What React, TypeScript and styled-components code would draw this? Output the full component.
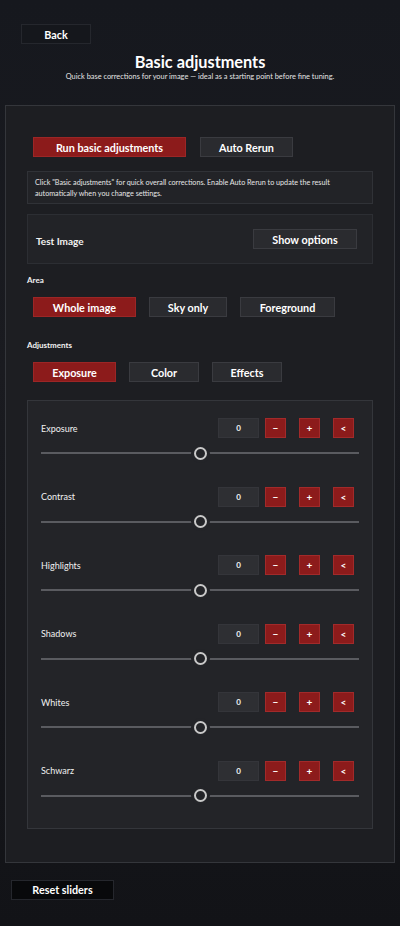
import React, { useState } from "react";
import styled, { createGlobalStyle } from "styled-components";

const GlobalStyle = createGlobalStyle`
  html, body {
    margin: 0;
    padding: 0;
    background: #14161b;
  }
  body {
    font-family: Lato, "Open Sans", "Liberation Sans", sans-serif;
    color: #f2f2f2;
  }
  * {
    box-sizing: border-box;
  }
`;

const Page = styled.div`
  min-height: 926px;
  background: linear-gradient(180deg, #16181e 0%, #1a1b20 40%, #121317 100%);
  padding: 24px 0 26px;
`;

const TopBar = styled.div`
  display: flex;
  padding-left: 21px;
`;

const Header = styled.header`
  display: flex;
  flex-direction: column;
  align-items: center;
  margin-top: 8px;
`;

const Title = styled.h1`
  margin: 0;
  font-size: 16.3px;
  line-height: 20px;
  font-weight: 700;
  color: #ffffff;
`;

const Subtitle = styled.p`
  margin: 0;
  font-size: 7.4px;
  line-height: 10px;
  color: #e4e4e4;
`;

const Button = styled.button<{ $variant?: "red" | "dark" | "black" | "ghost"; $width: number }>`
  display: block;
  height: 20px;
  width: ${(p) => p.$width}px;
  padding: 0;
  border: 1px solid
    ${(p) =>
      p.$variant === "red"
        ? "#9c2626"
        : p.$variant === "black" || p.$variant === "ghost"
          ? "#25272d"
          : "#3a3b40"};
  background: ${(p) =>
    p.$variant === "red"
      ? "#8c1b1b"
      : p.$variant === "black"
        ? "#08090b"
        : p.$variant === "ghost"
          ? "#15171c"
          : "#2a2b2f"};
  color: #ffffff;
  font-family: inherit;
  font-size: 10.8px;
  font-weight: 700;
  cursor: pointer;
`;

const Panel = styled.main`
  margin: 23px 5px 0;
  border: 1px solid #34363b;
  background: #1d1e22;
  padding: 31px 21px 33px;
`;

const ButtonRow = styled.div<{ $gap: number }>`
  display: flex;
  gap: ${(p) => p.$gap}px;
  padding-left: 6px;
`;

const InfoBox = styled.div`
  margin-top: 14px;
  border: 1px solid #303237;
  background: #222327;
  padding: 5px 7px 4px;
  font-size: 7.2px;
  line-height: 11px;
  color: #e6e6e6;
`;

const TestBox = styled.div`
  margin-top: 10px;
  height: 50px;
  border: 1px solid #2c2e33;
  background: #222327;
  display: flex;
  align-items: center;
  justify-content: space-between;
  padding: 0 15px 0 8px;
`;

const TestLabel = styled.span`
  font-size: 10px;
  font-weight: 700;
  margin-top: 3px;
`;

const SectionLabel = styled.div<{ $top: number }>`
  margin-top: ${(p) => p.$top}px;
  margin-bottom: 12px;
  font-size: 8px;
  line-height: 10px;
  font-weight: 700;
`;

const SliderPanel = styled.div`
  margin-top: 18px;
  border: 1px solid #34363b;
  background: #232428;
  padding: 17px 13px 25px 13px;
  display: flex;
  flex-direction: column;
  gap: 26.6px;
`;

const SliderRow = styled.div`
  display: flex;
  flex-direction: column;
  gap: 8px;
`;

const Controls = styled.div`
  display: flex;
  align-items: center;
  height: 20px;
  padding-right: 5px;
`;

const RowLabel = styled.span`
  flex: 1;
  font-size: 9px;
  color: #f0f0f0;
`;

const ValueBox = styled.div`
  width: 41px;
  height: 20px;
  background: #2e2f33;
  border: 1px solid #34353a;
  display: flex;
  align-items: center;
  justify-content: center;
  font-size: 8px;
  font-weight: 700;
  margin-right: 6px;
`;

const StepButton = styled.button<{ $gapLeft: number }>`
  width: 21px;
  height: 20px;
  margin-left: ${(p) => p.$gapLeft}px;
  padding: 0;
  background: #8c1b1b;
  border: 1px solid #a22a2a;
  color: #ffffff;
  font-family: inherit;
  font-size: 10px;
  font-weight: 700;
  display: flex;
  align-items: center;
  justify-content: center;
`;

const Range = styled.input`
  -webkit-appearance: none;
  appearance: none;
  width: 100%;
  height: 14px;
  margin: 0;
  background: transparent;

  &::-webkit-slider-runnable-track {
    height: 2px;
    background: #5a5b60;
  }
  &::-webkit-slider-thumb {
    -webkit-appearance: none;
    width: 13px;
    height: 13px;
    margin-top: -5.5px;
    border-radius: 50%;
    border: 2px solid #c9c9c9;
    background: #232428;
    box-shadow: 0 0 0 3px #232428;
  }
`;

const Footer = styled.div`
  display: flex;
  padding: 17px 0 0 11px;
`;

const rows = ["Exposure", "Contrast", "Highlights", "Shadows", "Whites", "Schwarz"];

export default function App() {
  const [values, setValues] = useState<number[]>(rows.map(() => 0));

  const update = (i: number, v: number) =>
    setValues((prev) => prev.map((x, j) => (j === i ? Math.max(-100, Math.min(100, v)) : x)));

  return (
    <>
      <GlobalStyle />
      <Page>
        <TopBar>
          <Button $variant="ghost" $width={70}>
            Back
          </Button>
        </TopBar>
        <Header>
          <Title>Basic adjustments</Title>
          <Subtitle>
            Quick base corrections for your image — ideal as a starting point before fine tuning.
          </Subtitle>
        </Header>

        <Panel>
          <ButtonRow $gap={14}>
            <Button $variant="red" $width={153}>
              Run basic adjustments
            </Button>
            <Button $width={93}>Auto Rerun</Button>
          </ButtonRow>

          <InfoBox>
            Click "Basic adjustments" for quick overall corrections. Enable Auto Rerun to update the
            result automatically when you change settings.
          </InfoBox>

          <TestBox>
            <TestLabel>Test Image</TestLabel>
            <Button $width={104}>Show options</Button>
          </TestBox>

          <SectionLabel $top={11}>Area</SectionLabel>
          <ButtonRow $gap={13}>
            <Button $variant="red" $width={103}>
              Whole image
            </Button>
            <Button $width={78}>Sky only</Button>
            <Button $width={95}>Foreground</Button>
          </ButtonRow>

          <SectionLabel $top={23}>Adjustments</SectionLabel>
          <ButtonRow $gap={13}>
            <Button $variant="red" $width={83}>
              Exposure
            </Button>
            <Button $width={70}>Color</Button>
            <Button $width={70}>Effects</Button>
          </ButtonRow>

          <SliderPanel>
            {rows.map((name, i) => (
              <SliderRow key={name}>
                <Controls>
                  <RowLabel>{name}</RowLabel>
                  <ValueBox>{values[i]}</ValueBox>
                  <StepButton $gapLeft={0} onClick={() => update(i, values[i] - 1)}>
                    −
                  </StepButton>
                  <StepButton $gapLeft={13} onClick={() => update(i, values[i] + 1)}>
                    +
                  </StepButton>
                  <StepButton $gapLeft={13} onClick={() => update(i, 0)}>
                    &lt;
                  </StepButton>
                </Controls>
                <Range
                  type="range"
                  min={-100}
                  max={100}
                  value={values[i]}
                  onChange={(e) => update(i, Number(e.target.value))}
                />
              </SliderRow>
            ))}
          </SliderPanel>
        </Panel>

        <Footer>
          <Button $variant="black" $width={103}>
            Reset sliders
          </Button>
        </Footer>
      </Page>
    </>
  );
}
